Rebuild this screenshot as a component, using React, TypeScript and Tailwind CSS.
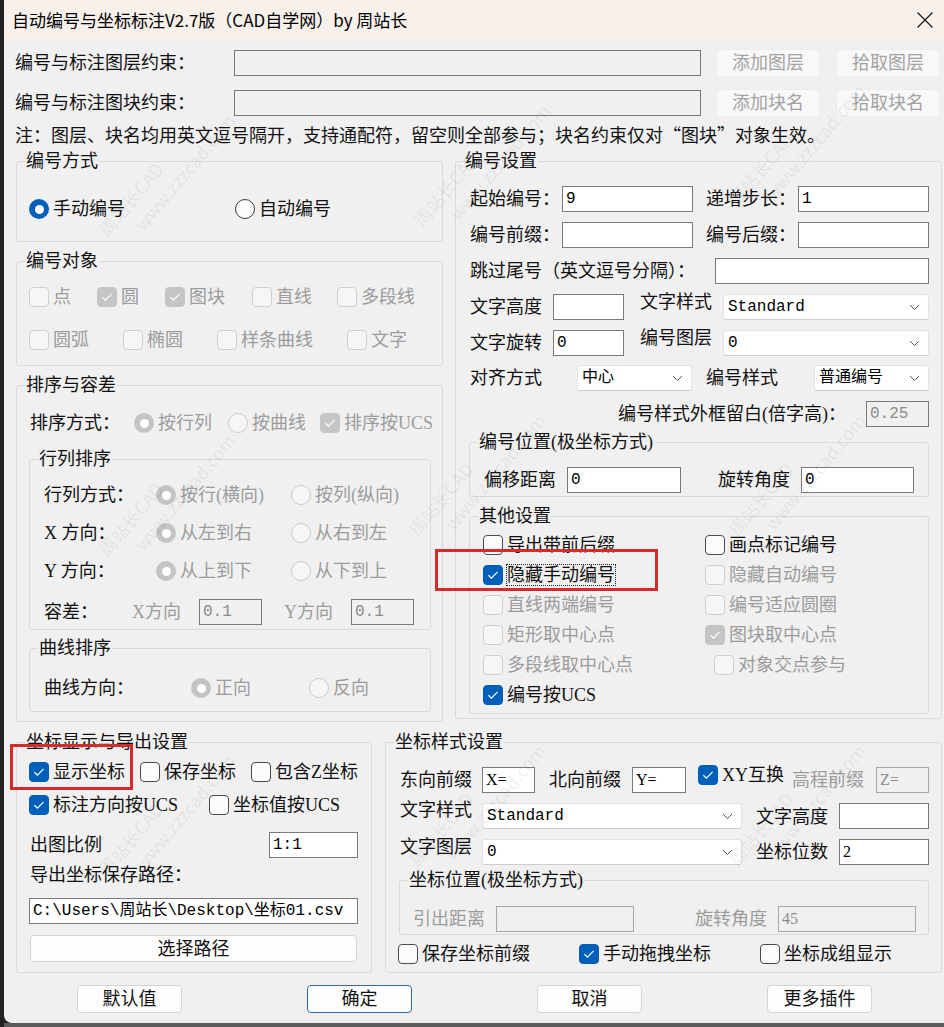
import React from "react";

const SANS = "font-[family-name:'Noto_Sans_CJK_SC',sans-serif]";
const BODY = "font-[family-name:'Liberation_Serif','Noto_Sans_CJK_SC',serif]";
const MONO = "font-[family-name:'Liberation_Mono','Noto_Sans_CJK_SC',monospace]";

type Kids = { children?: React.ReactNode };

function T({ className = "", dim = false, children }: Kids & { className?: string; dim?: boolean }) {
  return (
    <span
      className={`block shrink-0 whitespace-nowrap text-[18px] leading-[20px] ${
        dim ? "text-[#9c9c9c]" : "text-[#111111]"
      } ${className}`}
    >
      {children}
    </span>
  );
}

function Box({ checked = false, disabled = false }: { checked?: boolean; disabled?: boolean }) {
  const tone = checked
    ? disabled
      ? "border-[#c5c5c5] bg-[#c5c5c5]"
      : "border-[#005fb8] bg-[#005fb8]"
    : disabled
    ? "border-[#cfcfcf] bg-[#f6f6f6]"
    : "border-[#4a4a4a] bg-[#fbfbfb]";
  return (
    <span className={`flex h-[20px] w-[20px] shrink-0 items-center justify-center rounded-[4px] border ${tone}`}>
      {checked && (
        <svg width="12" height="10" viewBox="0 0 12 10">
          <path d="M1.4 5.2 L4.4 8.1 L10.6 1.8" fill="none" stroke="#ffffff" strokeWidth="1.2" />
        </svg>
      )}
    </span>
  );
}

function Dot({ checked = false, disabled = false }: { checked?: boolean; disabled?: boolean }) {
  if (checked) {
    return (
      <span
        className={`flex h-[20px] w-[20px] shrink-0 items-center justify-center rounded-full ${
          disabled ? "bg-[#c4c4c4]" : "bg-[#005fb8]"
        }`}
      >
        <span className="h-[9px] w-[9px] rounded-full bg-white" />
      </span>
    );
  }
  return (
    <span
      className={`h-[20px] w-[20px] shrink-0 rounded-full border ${
        disabled ? "border-[#cbcbcb] bg-[#f6f6f6]" : "border-[#3a3a3a] bg-[#fbfbfb]"
      }`}
    />
  );
}

function Opt({
  radio = false,
  checked = false,
  disabled = false,
  focus = false,
  w = "",
  className = "",
  children,
}: Kids & { radio?: boolean; checked?: boolean; disabled?: boolean; focus?: boolean; w?: string; className?: string }) {
  return (
    <div className={`flex shrink-0 items-center gap-[4px] ${w} ${className}`}>
      {radio ? <Dot checked={checked} disabled={disabled} /> : <Box checked={checked} disabled={disabled} />}
      <span
        className={`whitespace-nowrap text-[18px] leading-[20px] ${disabled ? "text-[#9c9c9c]" : "text-[#111111]"} ${
          focus ? "outline-1 outline-dotted outline-[#222222]" : ""
        }`}
      >
        {children}
      </span>
    </div>
  );
}

type Tone = "edit" | "grey" | "off" | "faint";

function Field({
  w,
  value = "",
  tone = "edit",
  className = "",
}: {
  w: string;
  value?: string;
  tone?: Tone;
  className?: string;
}) {
  const look =
    tone === "edit"
      ? "border-[#7a7a7a] bg-white text-black"
      : tone === "grey"
      ? "border-[#7a7a7a] bg-[#f0f0f0] text-black"
      : tone === "off"
      ? "border-[#7a7a7a] bg-[#f0f0f0] text-[#8c8c8c]"
      : "border-[#a8a8a8] bg-[#f0f0f0] text-[#8c8c8c]";
  return (
    <div
      className={`h-[26px] shrink-0 overflow-hidden whitespace-nowrap border pl-[3px] text-[16px] leading-[24px] ${look} ${w} ${className}`}
    >
      {value}
    </div>
  );
}

function Combo({ w, value }: { w: string; value: string }) {
  return (
    <div
      className={`flex h-[26px] shrink-0 items-center justify-between rounded-[3px] border border-[#e2e2e2] border-b-[#cdcdcd] bg-white pl-[4px] pr-[8px] ${w}`}
    >
      <span className={`whitespace-nowrap text-[16px] leading-[24px] text-black ${MONO}`}>{value}</span>
      <svg width="11" height="7" viewBox="0 0 11 7">
        <path d="M1 1 L5.5 5.5 L10 1" fill="none" stroke="#555555" strokeWidth="1" />
      </svg>
    </div>
  );
}

function Btn({
  w,
  h = "h-[28px]",
  disabled = false,
  primary = false,
  className = "",
  children,
}: Kids & { w: string; h?: string; disabled?: boolean; primary?: boolean; className?: string }) {
  const tone = disabled
    ? "border-[#ececec] bg-[#f8f8f8] text-[#a3a3a3]"
    : primary
    ? "border-[#2f6aa3] bg-[#fdfdfd] text-[#111111]"
    : "border-[#d4d4d4] bg-[#fdfdfd] text-[#111111]";
  return (
    <div
      className={`flex shrink-0 items-center justify-center rounded-[4px] border text-[18px] leading-[20px] ${tone} ${w} ${h} ${className}`}
    >
      {children}
    </div>
  );
}

function Group({ title, className = "", children }: Kids & { title: string; className?: string }) {
  return (
    <fieldset className={`min-w-0 shrink-0 rounded-[3px] border border-[#dadada] ${className}`}>
      <legend className="ml-[8px] px-[1px] text-[18px] leading-[20px] text-[#111111]">{title}</legend>
      {children}
    </fieldset>
  );
}

function Mark({ className }: { className: string }) {
  return (
    <div
      className={`pointer-events-none absolute flex w-[200px] -rotate-[50deg] flex-col items-start text-[18px] leading-[24px] text-[rgba(0,0,0,0.07)] ${SANS} ${className}`}
    >
      <span>周站长CAD</span>
      <span className="ml-[28px]">www.zzzcad.com</span>
    </div>
  );
}

export default function App() {
  return (
    <div className={`relative flex h-[1027px] w-[944px] flex-col overflow-hidden bg-[#232323] pl-[4px] ${BODY}`}>
      <div className="flex h-[1023px] w-[940px] shrink-0 flex-col overflow-hidden rounded-bl-[8px] bg-[#f0f0f0]">
        {/* title bar */}
        <div className="flex h-[40px] shrink-0 items-center justify-between bg-[#f7f0eb] pl-[8px] pr-[10px]">
          <span className={`text-[17px] leading-[22px] text-black ${SANS}`}>
            自动编号与坐标标注V2.7版（CAD自学网）by 周站长
          </span>
          <svg width="18" height="18" viewBox="0 0 18 18">
            <path d="M1.5 1.5 L16.5 16.5 M16.5 1.5 L1.5 16.5" stroke="#1a1a1a" strokeWidth="1.3" />
          </svg>
        </div>

        {/* layer / block filters */}
        <div className="mt-[8px] flex h-[29px] items-center pl-[11px]">
          <T className="w-[219px]">编号与标注图层约束：</T>
          <Field w="w-[467px]" tone="grey" />
          <Btn w="w-[104px]" disabled className="ml-[15px]">
            添加图层
          </Btn>
          <Btn w="w-[104px]" disabled className="ml-[16px]">
            拾取图层
          </Btn>
        </div>
        <div className="mt-[11px] flex h-[29px] items-center pl-[11px]">
          <T className="w-[219px]">编号与标注图块约束：</T>
          <Field w="w-[467px]" tone="grey" />
          <Btn w="w-[104px]" disabled className="ml-[15px]">
            添加块名
          </Btn>
          <Btn w="w-[104px]" disabled className="ml-[16px]">
            拾取块名
          </Btn>
        </div>
        <div className={`mt-[7px] h-[20px] pl-[11px] text-[18px] leading-[20px] text-[#111111] ${SANS}`}>
          注：图层、块名均用英文逗号隔开，支持通配符，留空则全部参与；块名约束仅对“图块”对象生效。
        </div>

        {/* two columns */}
        <div className="mt-[7px] flex items-start pl-[12px]">
          {/* left column */}
          <div className="flex w-[427px] shrink-0 flex-col">
            <Group title="编号方式" className="h-[91px]">
              <div className="mt-[28px] flex pl-[12px]">
                <Opt radio checked w="w-[206px]">
                  手动编号
                </Opt>
                <Opt radio>自动编号</Opt>
              </div>
            </Group>

            <Group title="编号对象" className="mt-[9px] h-[115px]">
              <div className="mt-[16px] flex pl-[12px]">
                <Opt disabled w="w-[68px]">点</Opt>
                <Opt disabled checked w="w-[68px]">圆</Opt>
                <Opt disabled checked w="w-[87px]">图块</Opt>
                <Opt disabled w="w-[85px]">直线</Opt>
                <Opt disabled>多段线</Opt>
              </div>
              <div className="mt-[23px] flex pl-[12px]">
                <Opt disabled w="w-[94px]">圆弧</Opt>
                <Opt disabled w="w-[94px]">椭圆</Opt>
                <Opt disabled w="w-[130px]">样条曲线</Opt>
                <Opt disabled>文字</Opt>
              </div>
            </Group>

            <Group title="排序与容差" className="mt-[9px] h-[347px]">
              <div className="mt-[18px] flex items-center pl-[13px]">
                <T className="w-[104px]">排序方式：</T>
                <Opt radio checked disabled w="w-[94px]">按行列</Opt>
                <Opt radio disabled w="w-[92px]">按曲线</Opt>
                <Opt checked disabled>排序按UCS</Opt>
              </div>

              <Group title="行列排序" className="ml-[12px] mt-[16px] h-[181px] w-[402px]">
                <div className="mt-[16px] flex items-center pl-[14px]">
                  <T className="w-[112px]">行列方式：</T>
                  <Opt radio checked disabled w="w-[135px]">按行(横向)</Opt>
                  <Opt radio disabled>按列(纵向)</Opt>
                </div>
                <div className="mt-[18px] flex items-center pl-[14px]">
                  <T className="w-[112px]">X 方向：</T>
                  <Opt radio checked disabled w="w-[135px]">从左到右</Opt>
                  <Opt radio disabled>从右到左</Opt>
                </div>
                <div className="mt-[18px] flex items-center pl-[14px]">
                  <T className="w-[112px]">Y 方向：</T>
                  <Opt radio checked disabled w="w-[135px]">从上到下</Opt>
                  <Opt radio disabled>从下到上</Opt>
                </div>
                <div className="mt-[18px] flex h-[26px] items-center pl-[14px]">
                  <T className="w-[88px]">容差：</T>
                  <T dim className="w-[67px]">X方向</T>
                  <Field w="w-[63px]" value="0.1" tone="off" className={MONO} />
                  <T dim className="ml-[22px] w-[67px]">Y方向</T>
                  <Field w="w-[63px]" value="0.1" tone="off" className={MONO} />
                </div>
              </Group>

              <Group title="曲线排序" className="ml-[12px] mt-[8px] h-[74px] w-[402px]">
                <div className="mt-[20px] flex items-center pl-[14px]">
                  <T className="w-[147px]">曲线方向：</T>
                  <Opt radio checked disabled w="w-[118px]">正向</Opt>
                  <Opt radio disabled>反向</Opt>
                </div>
              </Group>
            </Group>
          </div>

          {/* right column */}
          <div className="ml-[12px] flex w-[487px] shrink-0 flex-col">
            <Group title="编号设置" className="h-[568px]">
              <div className="mt-[15px] flex h-[26px] items-center pl-[14px]">
                <T className="w-[92px]">起始编号：</T>
                <Field w="w-[131px]" value="9" className={MONO} />
                <T className="ml-[13px] w-[92px]">递增步长：</T>
                <Field w="w-[131px]" value="1" className={MONO} />
              </div>
              <div className="mt-[10px] flex h-[26px] items-center pl-[14px]">
                <T className="w-[92px]">编号前缀：</T>
                <Field w="w-[131px]" />
                <T className="ml-[13px] w-[92px]">编号后缀：</T>
                <Field w="w-[131px]" />
              </div>
              <div className="mt-[10px] flex h-[26px] items-center pl-[14px]">
                <T className="w-[245px]">跳过尾号（英文逗号分隔）：</T>
                <Field w="w-[214px]" />
              </div>
              <div className="mt-[10px] flex h-[26px] items-start pl-[14px]">
                <T className="mt-[3px] w-[83px]">文字高度</T>
                <Field w="w-[71px]" />
                <T className="-mt-[2px] ml-[16px] w-[83px]">文字样式</T>
                <Combo w="w-[206px]" value="Standard" />
              </div>
              <div className="mt-[10px] flex h-[26px] items-start pl-[14px]">
                <T className="mt-[3px] w-[83px]">文字旋转</T>
                <Field w="w-[71px]" value="0" className={MONO} />
                <T className="-mt-[2px] ml-[16px] w-[83px]">编号图层</T>
                <Combo w="w-[206px]" value="0" />
              </div>
              <div className="mt-[9px] flex h-[26px] items-center pl-[14px]">
                <T className="w-[107px]">对齐方式</T>
                <Combo w="w-[115px]" value="中心" />
                <T className="ml-[14px] w-[108px]">编号样式</T>
                <Combo w="w-[115px]" value="普通编号" />
              </div>
              <div className="mt-[10px] flex h-[26px] items-center pl-[14px]">
                <T className="ml-[148px] w-[248px]">编号样式外框留白(倍字高)：</T>
                <Field w="w-[63px]" value="0.25" tone="off" className={MONO} />
              </div>

              <Group title="编号位置(极坐标方式)" className="ml-[13px] mt-[5px] h-[65px] w-[460px]">
                <div className="mt-[15px] flex h-[26px] items-center pl-[14px]">
                  <T className="w-[83px]">偏移距离</T>
                  <Field w="w-[114px]" value="0" className={MONO} />
                  <T className="ml-[37px] w-[83px]">旋转角度</T>
                  <Field w="w-[113px]" value="0" className={MONO} />
                </div>
              </Group>

              <Group title="其他设置" className="ml-[13px] mt-[9px] h-[208px] w-[460px]">
                <div className="mt-[9px] flex pl-[13px]">
                  <Opt w="w-[222px]">导出带前后缀</Opt>
                  <Opt>画点标记编号</Opt>
                </div>
                <div className="mt-[10px] flex pl-[13px]">
                  <Opt checked focus w="w-[222px]">隐藏手动编号</Opt>
                  <Opt disabled>隐藏自动编号</Opt>
                </div>
                <div className="mt-[10px] flex pl-[13px]">
                  <Opt disabled w="w-[222px]">直线两端编号</Opt>
                  <Opt disabled>编号适应圆圈</Opt>
                </div>
                <div className="mt-[10px] flex pl-[13px]">
                  <Opt disabled w="w-[222px]">矩形取中心点</Opt>
                  <Opt disabled checked>图块取中心点</Opt>
                </div>
                <div className="mt-[10px] flex pl-[13px]">
                  <Opt disabled w="w-[231px]">多段线取中心点</Opt>
                  <Opt disabled>对象交点参与</Opt>
                </div>
                <div className="mt-[10px] flex pl-[13px]">
                  <Opt checked>编号按UCS</Opt>
                </div>
              </Group>
            </Group>
          </div>
        </div>

        {/* coordinate settings */}
        <div className="mt-[10px] flex items-start pl-[12px]">
          <Group title="坐标显示与导出设置" className="h-[241px] w-[356px]">
            <div className="mt-[10px] flex pl-[12px]">
              <Opt checked w="w-[111px]">显示坐标</Opt>
              <Opt w="w-[111px]">保存坐标</Opt>
              <Opt>包含Z坐标</Opt>
            </div>
            <div className="mt-[13px] flex pl-[12px]">
              <Opt checked w="w-[180px]">标注方向按UCS</Opt>
              <Opt>坐标值按UCS</Opt>
            </div>
            <div className="mt-[17px] flex h-[26px] items-center pl-[13px]">
              <T className="w-[239px]">出图比例</T>
              <Field w="w-[89px]" value="1:1" className={MONO} />
            </div>
            <div className="mt-[7px] pl-[13px]">
              <T>导出坐标保存路径：</T>
            </div>
            <div className="mt-[13px] pl-[12px]">
              <Field w="w-[329px]" value="C:\Users\周站长\Desktop\坐标01.csv" className={MONO} />
            </div>
            <div className="mt-[11px] pl-[13px]">
              <Btn w="w-[327px]" h="h-[27px]">
                选择路径
              </Btn>
            </div>
          </Group>

          <Group title="坐标样式设置" className="ml-[13px] h-[241px] w-[557px]">
            <div className="mt-[15px] flex h-[26px] items-center pl-[14px]">
              <T className="w-[82px]">东向前缀</T>
              <Field w="w-[53px]" value="X=" />
              <T className="ml-[14px] w-[83px]">北向前缀</T>
              <Field w="w-[54px]" value="Y=" />
              <Opt checked w="w-[94px]" className="mb-[10px] ml-[12px]">
                XY互换
              </Opt>
              <T dim className="w-[84px]">高程前缀</T>
              <Field w="w-[53px]" value="Z=" tone="faint" />
            </div>
            <div className="mt-[10px] flex h-[26px] items-center pl-[14px]">
              <T className="mb-[12px] w-[82px]">文字样式</T>
              <Combo w="w-[260px]" value="Standard" />
              <T className="ml-[14px] mt-[2px] w-[83px]">文字高度</T>
              <Field w="w-[90px]" />
            </div>
            <div className="mt-[10px] flex h-[26px] items-center pl-[14px]">
              <T className="mb-[10px] w-[82px]">文字图层</T>
              <Combo w="w-[260px]" value="0" />
              <T className="ml-[14px] w-[83px]">坐标位数</T>
              <Field w="w-[90px]" value="2" />
            </div>

            <Group title="坐标位置(极坐标方式)" className="ml-[13px] mt-[5px] h-[65px] w-[530px]">
              <div className="mt-[16px] flex h-[26px] items-center pl-[13px]">
                <T dim className="w-[83px]">引出距离</T>
                <Field w="w-[138px]" tone="faint" />
                <T dim className="ml-[61px] w-[83px]">旋转角度</T>
                <Field w="w-[138px]" value="45" tone="faint" />
              </div>
            </Group>

            <div className="mt-[9px] flex pl-[12px]">
              <Opt w="w-[181px]">保存坐标前缀</Opt>
              <Opt checked w="w-[181px]">手动拖拽坐标</Opt>
              <Opt>坐标成组显示</Opt>
            </div>
          </Group>
        </div>

        {/* dialog buttons */}
        <div className="mt-[12px] flex gap-[125px] pl-[73px]">
          <Btn w="w-[105px]">默认值</Btn>
          <Btn w="w-[105px]" primary>
            确定
          </Btn>
          <Btn w="w-[105px]">取消</Btn>
          <Btn w="w-[105px]">更多插件</Btn>
        </div>
      </div>
      <div className="h-[4px] w-[940px] bg-[#5c5c5c]" />

      {/* highlight frames */}
      <div className="pointer-events-none absolute left-[435px] top-[549px] h-[42px] w-[223px] border-[3px] border-[#d42b2b]" />
      <div className="pointer-events-none absolute left-[10px] top-[744px] h-[46px] w-[123px] border-[3px] border-[#d42b2b]" />

      {/* watermark */}
      <Mark className="left-[75px] top-[140px]" />
      <Mark className="left-[390px] top-[130px]" />
      <Mark className="left-[705px] top-[110px]" />
      <Mark className="left-[75px] top-[460px]" />
      <Mark className="left-[385px] top-[440px]" />
      <Mark className="left-[705px] top-[440px]" />
      <Mark className="left-[75px] top-[780px]" />
      <Mark className="left-[385px] top-[770px]" />
      <Mark className="left-[705px] top-[770px]" />
    </div>
  );
}
